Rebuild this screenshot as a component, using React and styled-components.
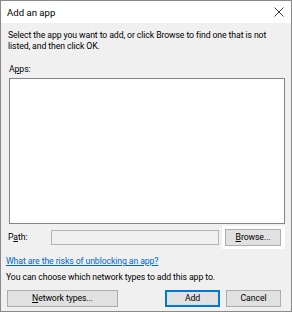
import React from 'react';
import styled, { createGlobalStyle, css } from 'styled-components';

const Global = createGlobalStyle`
  html, body { margin: 0; padding: 0; background: #ffffff; }
  body { font-family: Roboto, "Liberation Sans", Arial, sans-serif; }
`;

// 창 전체
const Window = styled.div`
  box-sizing: border-box;
  width: 292px;
  height: 312px;
  border: 1px solid #8a8a8a;
  background: #f0f0f0;
  display: flex;
  flex-direction: column;
  font-size: 8.7px;
  letter-spacing: -0.1px;
  color: #000;
`;

const TitleBar = styled.div`
  height: 22px;
  background: #ffffff;
  display: flex;
  align-items: center;
  justify-content: space-between;
  padding: 0 6px 0 6px;
  font-size: 9.6px;
  letter-spacing: 0;
`;

const Close = styled.div`
  width: 12px;
  height: 12px;
  display: flex;
  align-items: center;
  justify-content: center;
`;

const Body = styled.div`
  flex: 1;
  display: flex;
  flex-direction: column;
  padding: 7px 6px 0 4px;
  line-height: 11px;
`;

const Intro = styled.p`
  margin: 0 0 0 3px;
  width: 268px;
`;

const Label = styled.div`
  margin: 12px 0 3px 4px;
`;

const ListBox = styled.div`
  margin-left: 4px;
  height: 144px;
  background: #ffffff;
  border: 1px solid #82868c;
`;

const PathRow = styled.div`
  display: flex;
  align-items: center;
  margin-top: 2px;
  padding-left: 3px;
`;

const PathLabel = styled.div`
  width: 44px;
`;

const PathInput = styled.div`
  box-sizing: border-box;
  width: 171px;
  height: 15px;
  background: #f0f0f0;
  border: 1px solid #b4b4b4;
`;

// 버튼 주변 흰 테두리
const Halo = styled.div`
  margin-left: 3px;
  padding: 3px 4px 3px 3px;
  background: #ffffff;
`;

const Button = styled.div`
  box-sizing: border-box;
  width: ${p => p.w}px;
  height: 17px;
  display: flex;
  align-items: center;
  justify-content: center;
  background: #e1e1e1;
  border: 1px solid #adadad;
  ${p =>
    p.primary &&
    css`
      border: 2px solid #0078d7;
    `}
`;

const Link = styled.a`
  margin: 7px 0 0 1px;
  color: #0066cc;
  text-decoration: underline;
`;

const Note = styled.div`
  margin: 5px 0 0 1px;
`;

const Footer = styled.div`
  display: flex;
  align-items: center;
  justify-content: space-between;
  margin-top: 7px;
  padding: 0 4px 0 2px;
`;

const Actions = styled.div`
  display: flex;
  gap: 6px;
`;

const U = styled.span`
  text-decoration: underline;
`;

export default function App() {
  return (
    <>
      <Global />
      <Window>
        <TitleBar>
          <span>Add an app</span>
          <Close>
            <svg width="10" height="10" viewBox="0 0 10 10">
              <path d="M0.5 0.5 L9.5 9.5 M9.5 0.5 L0.5 9.5" stroke="#222" strokeWidth="0.9" />
            </svg>
          </Close>
        </TitleBar>
        <Body>
          <Intro>
            Select the app you want to add, or click Browse to find one that is not listed, and then click OK.
          </Intro>
          <Label>
            A<U>p</U>ps:
          </Label>
          <ListBox />
          <PathRow>
            <PathLabel>
              P<U>a</U>th:
            </PathLabel>
            <PathInput />
            <Halo>
              <Button w={56}>
                <U>B</U>rowse...
              </Button>
            </Halo>
          </PathRow>
          <Link>What are the risks of unblocking an app?</Link>
          <Note>You can choose which network types to add this app to.</Note>
          <Footer>
            <Button w={111}>
              <U>N</U>etwork types...
            </Button>
            <Actions>
              <Button w={55} primary>
                Add
              </Button>
              <Button w={55}>Cancel</Button>
            </Actions>
          </Footer>
        </Body>
      </Window>
    </>
  );
}
